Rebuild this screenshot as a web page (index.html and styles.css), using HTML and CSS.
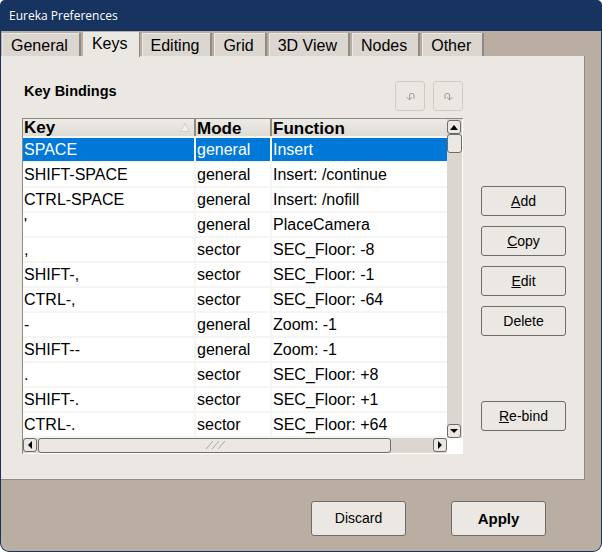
FILE: index.html
```html
<!DOCTYPE html>
<html lang="en">
<head>
    <meta charset="UTF-8">
    <title>Eureka Preferences</title>
    <link rel="stylesheet" href="styles.css">
</head>
<body>
    <div class="window">
        <div class="titlebar">Eureka Preferences</div>
        <div class="client">
            <div class="tabs">
                <div class="tab">General</div>
                <div class="tab tab-active">Keys</div>
                <div class="tab">Editing</div>
                <div class="tab">Grid</div>
                <div class="tab">3D View</div>
                <div class="tab">Nodes</div>
                <div class="tab">Other</div>
            </div>
            <div class="panel">
                <div class="panel-head">
                    <h1>Key Bindings</h1>
                    <div class="move-buttons">
                        <div class="move-btn">
                            <svg width="9" height="9" viewBox="0 0 9 9"><path d="M3.5 8V3Q3.5 1.5 5 1.5H6.5Q8 1.5 8 3V7M0.5 5L3.5 8L6 5" fill="none" stroke="#a09c96" stroke-width="1"/></svg>
                        </div>
                        <div class="move-btn">
                            <svg width="9" height="9" viewBox="0 0 9 9"><path d="M1 7V3Q1 1.5 2.5 1.5H4Q5.5 1.5 5.5 3V8M3 5L5.5 8L8.5 5" fill="none" stroke="#a09c96" stroke-width="1"/></svg>
                        </div>
                    </div>
                </div>
                <div class="panel-body">
                    <div class="bindings">
                        <div class="list-area">
                            <div class="list">
                                <div class="row row-head">
                                    <div class="cell cell-key">Key
                                        <svg width="10" height="9" viewBox="0 0 10 9"><path d="M5 0.5L9.5 8.5H0.5Z" fill="#f1efeb" stroke="#d2cec8" stroke-width="1"/></svg>
                                    </div>
                                    <div class="cell">Mode</div>
                                    <div class="cell">Function</div>
                                </div>
                                <div class="row row-selected">
                                    <div class="cell">SPACE</div><div class="cell">general</div><div class="cell">Insert</div>
                                </div>
                                <div class="row">
                                    <div class="cell">SHIFT-SPACE</div><div class="cell">general</div><div class="cell">Insert: /continue</div>
                                </div>
                                <div class="row">
                                    <div class="cell">CTRL-SPACE</div><div class="cell">general</div><div class="cell">Insert: /nofill</div>
                                </div>
                                <div class="row">
                                    <div class="cell">'</div><div class="cell">general</div><div class="cell">PlaceCamera</div>
                                </div>
                                <div class="row">
                                    <div class="cell">,</div><div class="cell">sector</div><div class="cell">SEC_Floor: -8</div>
                                </div>
                                <div class="row">
                                    <div class="cell">SHIFT-,</div><div class="cell">sector</div><div class="cell">SEC_Floor: -1</div>
                                </div>
                                <div class="row">
                                    <div class="cell">CTRL-,</div><div class="cell">sector</div><div class="cell">SEC_Floor: -64</div>
                                </div>
                                <div class="row">
                                    <div class="cell">-</div><div class="cell">general</div><div class="cell">Zoom: -1</div>
                                </div>
                                <div class="row">
                                    <div class="cell">SHIFT--</div><div class="cell">general</div><div class="cell">Zoom: -1</div>
                                </div>
                                <div class="row">
                                    <div class="cell">.</div><div class="cell">sector</div><div class="cell">SEC_Floor: +8</div>
                                </div>
                                <div class="row">
                                    <div class="cell">SHIFT-.</div><div class="cell">sector</div><div class="cell">SEC_Floor: +1</div>
                                </div>
                                <div class="row">
                                    <div class="cell">CTRL-.</div><div class="cell">sector</div><div class="cell">SEC_Floor: +64</div>
                                </div>
                            </div>
                            <div class="vscroll">
                                <div class="arrow-btn"><span class="tri tri-up"></span></div>
                                <div class="vthumb"></div>
                                <div class="vtrack"></div>
                                <div class="arrow-btn"><span class="tri tri-down"></span></div>
                            </div>
                        </div>
                        <div class="hscroll">
                            <div class="arrow-btn"><span class="tri tri-left"></span></div>
                            <div class="hthumb">
                                <svg width="20" height="8" viewBox="0 0 20 8"><path d="M1 8L8 0M7 8L14 0M13 8L20 0" fill="none" stroke="#aaa69f" stroke-width="1"/></svg>
                            </div>
                            <div class="htrack"></div>
                            <div class="arrow-btn"><span class="tri tri-right"></span></div>
                            <div class="corner"></div>
                        </div>
                    </div>
                    <div class="side">
                        <div class="btn"><span><u>A</u>dd</span></div>
                        <div class="btn"><span><u>C</u>opy</span></div>
                        <div class="btn"><span><u>E</u>dit</span></div>
                        <div class="btn">Delete</div>
                        <div class="btn btn-rebind"><span><u>R</u>e-bind</span></div>
                    </div>
                </div>
            </div>
            <div class="footer">
                <div class="btn btn-foot">Discard</div>
                <div class="btn btn-foot btn-apply">Apply</div>
            </div>
        </div>
    </div>
</body>
</html>
```

FILE: styles.css
```css
html, body {
    margin: 0;
    background-color: #fff;
}
.window {
    width: 602px;
    height: 552px;
    display: flex;
    flex-direction: column;
    font-family: "Liberation Sans", Arial, sans-serif;
    color: #000;
    background-color: #17335f;
    border-radius: 5px 5px 9px 9px;
    overflow: hidden;
}
.titlebar {
    height: 31px;
    line-height: 32px;
    padding-left: 9px;
    font-family: "Open Sans", sans-serif;
    font-size: 12px;
    color: #fff;
    box-sizing: border-box;
}
.client {
    flex: 1;
    margin: 0 1px 1px;
    background-color: #b9aea1;
    border-radius: 0 0 8px 8px;
}
.tabs {
    display: flex;
    height: 25px;
    padding-left: 1px;
    gap: 2px;
    align-items: flex-end;
}
.tab {
    height: 23px;
    line-height: 25px;
    padding: 0 11px 0 9px;
    font-size: 16px;
    background-color: #dbd6cf;
    border-right: 2px solid #8e8a84;
    box-shadow: inset 1px 1px 0 #ece9e4;
}
.tab-active {
    height: 25px;
    line-height: 24px;
    background-color: #ebe8e3;
    margin-bottom: -1px;
    position: relative;
    border-right: 1px solid #8e8a84;
}
.panel {
    width: 584px;
    height: 424px;
    box-sizing: border-box;
    background-color: #ebe8e3;
    border-right: 1px solid #8e8a84;
    border-bottom: 1px solid #8e8a84;
    padding: 25px 0 0 21px;
}
.panel-head {
    display: flex;
    justify-content: space-between;
    width: 441px;
    height: 37px;
}
h1 {
    margin: 0;
    padding-left: 2px;
    font-size: 14.5px;
    line-height: 20px;
    font-weight: bold;
}
.move-buttons {
    display: flex;
    gap: 8px;
}
.move-btn {
    width: 30px;
    height: 30px;
    box-sizing: border-box;
    border: 1px solid #cfcbc5;
    border-radius: 3px;
    display: flex;
    align-items: center;
    justify-content: center;
}
.panel-body {
    display: flex;
}
.bindings {
    width: 441px;
    height: 336px;
    background-color: #fff;
    border-top: 1px solid #8e8a84;
    border-left: 1px solid #8e8a84;
    box-sizing: border-box;
}
.list-area {
    display: flex;
    height: 319px;
}
.list {
    width: 424px;
    background-color: #f6f5f3;
}
.row {
    display: grid;
    grid-template-columns: 171px 74px 1fr;
    column-gap: 2px;
    height: 23px;
    margin-bottom: 2px;
}
.cell {
    padding-left: 1px;
    font-size: 16px;
    line-height: 23px;
    white-space: nowrap;
    overflow: hidden;
    background-color: #fff;
}
.row-head {
    height: 17px;
    margin-bottom: 2px;
    background-color: #8e8a84;
}
.row-head .cell {
    font-size: 17px;
    font-weight: bold;
    line-height: 19px;
    overflow: visible;
    height: 17px;
    background: linear-gradient(#eeebe7, #dfdbd5);
}
.cell-key {
    display: flex;
    justify-content: space-between;
    align-items: center;
    padding-right: 4px;
}
.row-selected .cell {
    background-color: #0078d7;
    color: #fff;
}
.vscroll {
    width: 15px;
    display: flex;
    flex-direction: column;
    background-color: #dbd6cf;
}
.vtrack {
    flex: 1;
}
.vthumb {
    height: 19px;
    box-sizing: border-box;
    border: 1px solid #6f6c67;
    border-radius: 3px;
    background-color: #ebe8e3;
}
.arrow-btn {
    width: 14px;
    height: 14px;
    flex: none;
    box-sizing: border-box;
    border: 1px solid #6f6c67;
    border-radius: 3px;
    background-color: #ebe8e3;
    display: flex;
    align-items: center;
    justify-content: center;
}
.vscroll .arrow-btn:first-child {
    margin-top: 1px;
}
.tri {
    width: 0;
    height: 0;
}
.tri-up {
    border-left: 4px solid transparent;
    border-right: 4px solid transparent;
    border-bottom: 5px solid #000;
}
.tri-down {
    border-left: 4px solid transparent;
    border-right: 4px solid transparent;
    border-top: 4px solid #000;
}
.tri-left {
    border-top: 4px solid transparent;
    border-bottom: 4px solid transparent;
    border-right: 4px solid #000;
}
.tri-right {
    border-top: 4px solid transparent;
    border-bottom: 4px solid transparent;
    border-left: 4px solid #000;
}
.hscroll {
    display: flex;
    height: 15px;
    background-color: #dbd6cf;
}
.hthumb {
    width: 353px;
    height: 15px;
    margin-left: 1px;
    box-sizing: border-box;
    border: 1px solid #6f6c67;
    border-radius: 3px;
    background-color: #ebe8e3;
    display: flex;
    justify-content: center;
    padding-top: 2px;
}
.htrack {
    flex: 1;
}
.corner {
    width: 16px;
    background-color: #fff;
}
.side {
    display: flex;
    flex-direction: column;
    gap: 10px;
    margin: 68px 0 0 18px;
}
.btn {
    width: 85px;
    height: 30px;
    box-sizing: border-box;
    border: 1px solid #6f6c67;
    border-radius: 3px;
    background-color: #ebe8e3;
    font-size: 14px;
    text-align: center;
    line-height: 28px;
}
.btn-rebind {
    margin-top: 55px;
}
.footer {
    display: flex;
    justify-content: flex-end;
    gap: 45px;
    padding: 21px 55px 0 0;
}
.btn-foot {
    width: 95px;
    height: 35px;
    line-height: 33px;
}
.btn-apply {
    font-weight: bold;
    font-size: 15px;
}
```
